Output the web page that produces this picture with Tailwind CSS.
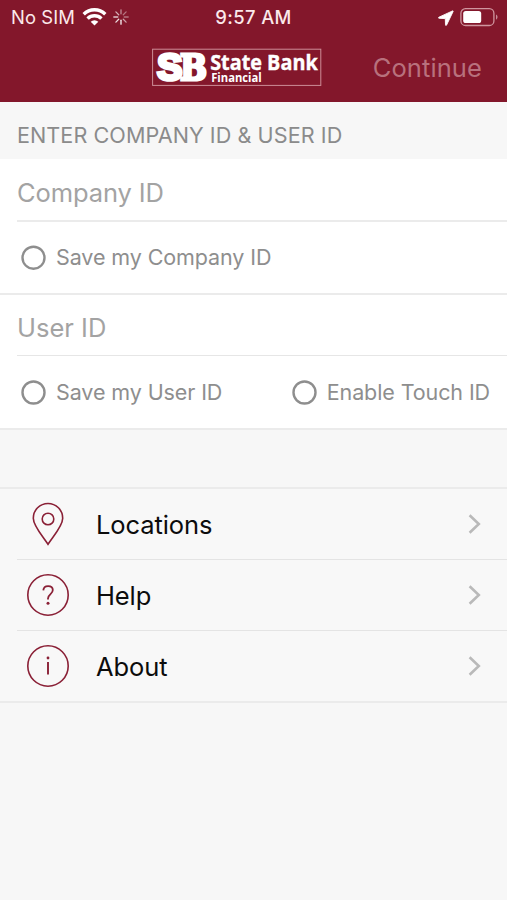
<!DOCTYPE html>
<html lang="en">
<head>
<meta charset="utf-8">
<meta name="viewport" content="width=device-width, initial-scale=1">
<title>State Bank Financial</title>
<script src="https://cdn.jsdelivr.net/npm/@tailwindcss/browser@4"></script>
</head>
<body class="h-[900px] w-[507px] overflow-hidden bg-[#f7f7f7] font-['Inter',sans-serif] text-[#8e8e8e]">
<header class="h-[102px] bg-[#83172b] text-white">
  <div class="grid h-[35px] grid-cols-3 items-center">
    <div class="flex items-center pl-[11px]">
      <span class="w-[64px] whitespace-nowrap text-[18.4px] tracking-[0.1px] text-[#fbe9ea]">No SIM</span>
      <svg class="ml-[7px] h-[18px] w-[25px] shrink-0" viewBox="0 0 25 18" fill="none" stroke="#fff" stroke-width="3.4"><path d="M1.7 6.2a15.4 15.4 0 0 1 21.6 0"/><path d="M5.6 10.6a9.8 9.8 0 0 1 13.8 0"/><path d="M12.5 17.4 8.7 13.8a5.4 5.4 0 0 1 7.6 0z" fill="#fff" stroke="none"/></svg>
      <svg class="ml-[6px] h-[16px] w-[16px] shrink-0" viewBox="0 0 16 16" stroke="#fff" stroke-width="1.3" stroke-linecap="round"><path d="M8 .8v4" opacity=".5"/><path d="m13.1 2.9-2.8 2.8" opacity=".4"/><path d="M15.2 8h-4" opacity=".4"/><path d="m13.1 13.1-2.8-2.8" opacity=".6"/><path d="M8 15.2v-4" opacity=".95"/><path d="m2.9 13.1 2.8-2.8" opacity=".85"/><path d="M.8 8h4" opacity=".75"/><path d="m2.9 2.9 2.8 2.8" opacity=".65"/></svg>
    </div>
    <div class="text-center text-[18.4px] font-medium tracking-[0.4px] text-[#fbe9ea]"><span>9:57 AM</span></div>
    <div class="flex items-center justify-end pr-[9px]">
      <svg class="mr-[6px] h-[16px] w-[16px]" viewBox="0 0 16 16" fill="#fff" stroke="#fff" stroke-width=".9"><path d="M14.6.9.9 7.2c-.7.4-.5 1 .3 1.1l6.1.3.2 6.2c0 .8.8.9 1.1.2l6.5-13.5c.2-.5-.1-.8-.5-.6z"/></svg>
      <svg class="h-[20px] w-[38px]" viewBox="0 0 38 20" fill="none"><rect x=".9" y=".2" width="33" height="16.8" rx="4.6" stroke="#d0969f" stroke-width="1.3" transform="translate(0 .5)"/><rect x="3.2" y="2.9" width="18" height="12.2" rx="2.6" fill="#fff"/><path d="M36 6.4v5.2c1-.4 1.5-1.4 1.5-2.6s-.5-2.2-1.5-2.6z" fill="#c58c96"/></svg>
    </div>
  </div>
  <div class="flex h-[67px] items-start justify-between pl-[152px]">
    <svg class="mt-[13px] h-[39px] w-[170px] overflow-visible" viewBox="0 0 170 39" fill="#fff">
      <rect x=".6" y="1.2" width="168.2" height="36.2" fill="none" stroke="#cd8d97" stroke-width="1"/>
      <text x="5.2" y="31.9" font-family="Liberation Sans" font-weight="700" font-size="36" textLength="25" lengthAdjust="spacingAndGlyphs" stroke="#fff" stroke-width="3.6">S</text>
      <text x="28" y="32.2" font-family="DejaVu Serif" font-weight="700" font-size="36" textLength="27" lengthAdjust="spacingAndGlyphs" stroke="#fff" stroke-width="3">B</text>
      <text x="58.2" y="22" font-family="Open Sans" font-weight="700" font-size="22" textLength="107.5" lengthAdjust="spacingAndGlyphs" stroke="#fff" stroke-width=".4">State Bank</text>
      <text x="59.2" y="34" font-family="Open Sans" font-weight="700" font-size="12.4" textLength="50.5" lengthAdjust="spacingAndGlyphs">Financial</text>
    </svg>
    <button class="mr-[25px] mt-[17px] text-[25.5px] leading-[32px] tracking-[0.1px] text-[#b8717d]">Continue</button>
  </div>
</header>
<main>
  <h1 class="flex h-[57px] items-center whitespace-nowrap pl-[17px] pt-[9px] text-[21.6px] tracking-[0.06px] text-[#8b8b8b]">ENTER COMPANY ID &amp; USER ID</h1>
  <section class="border-b-2 border-[#ebebeb] bg-white">
    <div class="ml-[17px] flex h-[63px] items-center border-b-2 border-[#ebebeb] pt-[8px] text-[25.5px] tracking-[-0.1px] text-[#a3a3a3]">Company ID</div>
    <div class="flex h-[71px] items-center gap-[10px] pl-[21px] text-[21.5px] tracking-[-0.1px]">
      <svg class="h-[25px] w-[25px]" viewBox="0 0 25 25" fill="none" stroke="#8e8e8e" stroke-width="2.4"><circle cx="12.5" cy="12.7" r="11"/></svg><span>Save my Company ID</span>
    </div>
  </section>
  <section class="border-b-2 border-[#ebebeb] bg-white">
    <div class="ml-[17px] flex h-[61px] items-center border-b border-[#e6e6e6] pt-[6px] text-[25.5px] text-[#a3a3a3]">User ID</div>
    <div class="flex h-[72px] items-center justify-between pl-[21px] pr-[17px] text-[21.5px] tracking-[-0.1px]">
      <div class="flex items-center gap-[10px]"><svg class="h-[25px] w-[25px]" viewBox="0 0 25 25" fill="none" stroke="#8e8e8e" stroke-width="2.4"><circle cx="12.5" cy="12.5" r="11"/></svg><span>Save my User ID</span></div>
      <div class="flex items-center gap-[10px]"><svg class="h-[25px] w-[25px]" viewBox="0 0 25 25" fill="none" stroke="#8e8e8e" stroke-width="2.4"><circle cx="12.5" cy="12.5" r="11"/></svg><span>Enable Touch ID</span></div>
    </div>
  </section>
  <nav class="mt-[57px] border-y-2 border-[#ebebeb] bg-[#f8f8f8] text-[25.5px] tracking-[-0.1px] text-[#0c0c0c]">
    <a class="ml-[17px] flex h-[71px] items-center border-b border-[#e4e4e4] pl-[10px] pr-[26px]">
      <svg class="h-[44px] w-[42px]" viewBox="0 0 42 44" fill="none" stroke="#8a2036" stroke-width="1.6"><path d="M21 42.3C16 34.5 6.3 24 6.3 16.2a14.7 14.7 0 0 1 29.4 0C35.7 24 26 34.5 21 42.3z"/><circle cx="21" cy="17" r="5.8"/></svg>
      <span class="ml-[27px] flex-1 pt-[2px]">Locations</span>
      <svg class="h-[20px] w-[13px]" viewBox="0 0 13 20" fill="none" stroke="#b9b9b9" stroke-width="2.6"><path d="m1.6 1.3 9.2 8.7-9.2 8.7"/></svg>
    </a>
    <a class="ml-[17px] flex h-[71px] items-center border-b border-[#e4e4e4] pl-[10px] pr-[26px]">
      <svg class="h-[44px] w-[42px]" viewBox="0 0 42 44" fill="none" stroke="#8a2036" stroke-width="1.6"><circle cx="21" cy="22" r="20.2"/><path d="M16.3 17.4c.2-2.7 2-4.3 4.8-4.3s4.7 1.6 4.7 4c0 4.2-4.8 3.8-4.8 8.5v.8" stroke-width="1.8"/><circle cx="21" cy="30.2" r="1.5" fill="#8a2036" stroke="none"/></svg>
      <span class="ml-[27px] flex-1 pt-[2px]">Help</span>
      <svg class="h-[20px] w-[13px]" viewBox="0 0 13 20" fill="none" stroke="#b9b9b9" stroke-width="2.6"><path d="m1.6 1.3 9.2 8.7-9.2 8.7"/></svg>
    </a>
    <a class="ml-[17px] flex h-[70px] items-center pl-[10px] pr-[26px]">
      <svg class="h-[44px] w-[42px]" viewBox="0 0 42 44" fill="none" stroke="#8a2036" stroke-width="1.6"><circle cx="21" cy="22" r="20.2"/><path d="M21 18v12.5" stroke-width="1.9"/><circle cx="21" cy="14" r="1.4" fill="#8a2036" stroke="none"/></svg>
      <span class="ml-[27px] flex-1 pt-[2px]">About</span>
      <svg class="h-[20px] w-[13px]" viewBox="0 0 13 20" fill="none" stroke="#b9b9b9" stroke-width="2.6"><path d="m1.6 1.3 9.2 8.7-9.2 8.7"/></svg>
    </a>
  </nav>
</main>
</body>
</html>
